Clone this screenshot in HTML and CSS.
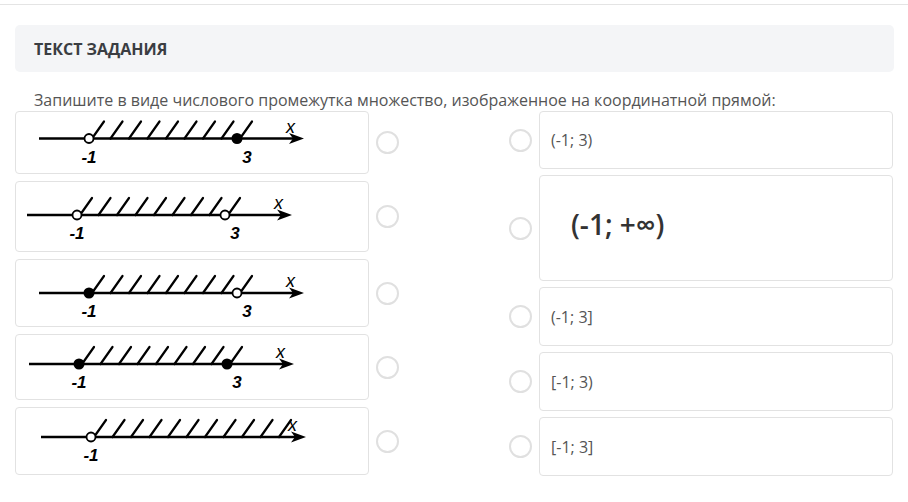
FILE: index.html
```html
<!DOCTYPE html>
<html lang="ru">
<head>
<meta charset="utf-8">
<title>Текст задания</title>
<link rel="stylesheet" href="styles.css">
</head>
<body>
<div class="topline"></div>
<div class="page">
  <div class="header">ТЕКСТ ЗАДАНИЯ</div>
  <p class="task">Запишите в виде числового промежутка множество, изображенное на координатной прямой:</p>
  <div class="answers">
    <div class="col col-left">
      <div class="row">
        <div class="card">
          <svg class="nl" width="352" height="61" viewBox="0 0 352 61">
            <g transform="translate(73 26.5)">
              <line class="ax" x1="-50" y1="0" x2="208" y2="0"/>
              <path class="arrow" d="M200,-5.5 L215,0 L200,5.5 L204,0 Z"/>
              <path class="hatch" d="M3,0 l12,-17 M21.5,0 l12,-17 M40,0 l12,-17 M58.5,0 l12,-17 M77,0 l12,-17 M95.5,0 l12,-17 M114,0 l12,-17 M132.5,0 l12,-17 M151,0 l12,-17"/>
              <circle class="open" cx="0" cy="0" r="4.5"/>
              <circle class="fill" cx="148" cy="0" r="5.5"/>
              <text class="lbl" x="0" y="24">-1</text>
              <text class="lbl" x="158" y="24">3</text>
              <text class="var" x="197" y="-6">x</text>
            </g>
          </svg>
        </div>
        <span class="radio"></span>
      </div>
      <div class="row">
        <div class="card">
          <svg class="nl" width="352" height="69" viewBox="0 0 352 69">
            <g transform="translate(61 33)">
              <line class="ax" x1="-50" y1="0" x2="208" y2="0"/>
              <path class="arrow" d="M200,-5.5 L215,0 L200,5.5 L204,0 Z"/>
              <path class="hatch" d="M3,0 l12,-17 M21.5,0 l12,-17 M40,0 l12,-17 M58.5,0 l12,-17 M77,0 l12,-17 M95.5,0 l12,-17 M114,0 l12,-17 M132.5,0 l12,-17 M151,0 l12,-17"/>
              <circle class="open" cx="0" cy="0" r="4.5"/>
              <circle class="open" cx="148" cy="0" r="4.5"/>
              <text class="lbl" x="0" y="24">-1</text>
              <text class="lbl" x="158" y="24">3</text>
              <text class="var" x="197" y="-6">x</text>
            </g>
          </svg>
        </div>
        <span class="radio"></span>
      </div>
      <div class="row">
        <div class="card">
          <svg class="nl" width="352" height="66" viewBox="0 0 352 66">
            <g transform="translate(73 33)">
              <line class="ax" x1="-50" y1="0" x2="208" y2="0"/>
              <path class="arrow" d="M200,-5.5 L215,0 L200,5.5 L204,0 Z"/>
              <path class="hatch" d="M3,0 l12,-17 M21.5,0 l12,-17 M40,0 l12,-17 M58.5,0 l12,-17 M77,0 l12,-17 M95.5,0 l12,-17 M114,0 l12,-17 M132.5,0 l12,-17 M151,0 l12,-17"/>
              <circle class="fill" cx="0" cy="0" r="5.5"/>
              <circle class="open" cx="148" cy="0" r="4.5"/>
              <text class="lbl" x="0" y="24">-1</text>
              <text class="lbl" x="158" y="24">3</text>
              <text class="var" x="197" y="-6">x</text>
            </g>
          </svg>
        </div>
        <span class="radio"></span>
      </div>
      <div class="row">
        <div class="card">
          <svg class="nl" width="352" height="64" viewBox="0 0 352 64">
            <g transform="translate(63 29)">
              <line class="ax" x1="-50" y1="0" x2="208" y2="0"/>
              <path class="arrow" d="M200,-5.5 L215,0 L200,5.5 L204,0 Z"/>
              <path class="hatch" d="M3,0 l12,-17 M21.5,0 l12,-17 M40,0 l12,-17 M58.5,0 l12,-17 M77,0 l12,-17 M95.5,0 l12,-17 M114,0 l12,-17 M132.5,0 l12,-17 M151,0 l12,-17"/>
              <circle class="fill" cx="0" cy="0" r="5.5"/>
              <circle class="fill" cx="148" cy="0" r="5.5"/>
              <text class="lbl" x="0" y="24">-1</text>
              <text class="lbl" x="158" y="24">3</text>
              <text class="var" x="197" y="-6">x</text>
            </g>
          </svg>
        </div>
        <span class="radio"></span>
      </div>
      <div class="row">
        <div class="card">
          <svg class="nl" width="352" height="66" viewBox="0 0 352 66">
            <g transform="translate(75 29)">
              <line class="ax" x1="-50" y1="0" x2="208" y2="0"/>
              <path class="arrow" d="M200,-5.5 L215,0 L200,5.5 L204,0 Z"/>
              <path class="hatch" d="M3,0 l12,-17 M21.5,0 l12,-17 M40,0 l12,-17 M58.5,0 l12,-17 M77,0 l12,-17 M95.5,0 l12,-17 M114,0 l12,-17 M132.5,0 l12,-17 M151,0 l12,-17 M169.5,0 l12,-17 M188,0 l12,-17"/>
              <circle class="open" cx="0" cy="0" r="4.5"/>
              <text class="lbl" x="0" y="24">-1</text>
              <text class="var" x="197" y="-6">x</text>
            </g>
          </svg>
        </div>
        <span class="radio"></span>
      </div>
    </div>
    <div class="col col-right">
      <div class="row">
        <span class="radio"></span>
        <div class="card card-text">(-1; 3)</div>
      </div>
      <div class="row">
        <span class="radio"></span>
        <div class="card card-text card-tall"><span class="big">(-1; +∞)</span></div>
      </div>
      <div class="row">
        <span class="radio"></span>
        <div class="card card-text">(-1; 3]</div>
      </div>
      <div class="row">
        <span class="radio"></span>
        <div class="card card-text">[-1; 3)</div>
      </div>
      <div class="row">
        <span class="radio"></span>
        <div class="card card-text">[-1; 3]</div>
      </div>
    </div>
  </div>
</div>
</body>
</html>
```
FILE: styles.css
```css
* { box-sizing: border-box; }

body {
  margin: 0;
  background: #ffffff;
  font-family: "Open Sans", "Liberation Sans", sans-serif;
  color: #555;
}

.topline {
  height: 5px;
  border-bottom: 1px solid #e4e4e4;
}

.page {
  width: 879px;
  margin-left: 15px;
}

.header {
  margin-top: 20px;
  height: 47px;
  background: #f4f5f7;
  border-radius: 5px;
  display: flex;
  align-items: center;
  padding-left: 19px;
  font-size: 16px;
  font-weight: 700;
  color: #3a3d42;
}

.task {
  margin: 17px 0 0 19px;
  font-size: 16px;
  line-height: 22px;
  color: #555;
}

.answers {
  display: flex;
  justify-content: space-between;
  width: 878px;
}

.col {
  display: flex;
  flex-direction: column;
  width: 384px;
}

.col-left { gap: 7px; }
.col-right { gap: 6px; }

.row {
  display: flex;
  align-items: center;
  gap: 7px;
}

.card {
  width: 354px;
  flex: none;
  border: 1px solid #e2e2e2;
  border-radius: 4px;
  background: #fff;
}

.nl { display: block; }

.ax { stroke: #000; stroke-width: 2.4; }
.arrow { fill: #000; }
.hatch { stroke: #000; stroke-width: 2.2; fill: none; stroke-linecap: round; }
.open { fill: #fff; stroke: #000; stroke-width: 1.8; }
.fill { fill: #000; }

.lbl {
  font-family: "Liberation Sans", Arial, sans-serif;
  font-size: 17px;
  font-weight: 700;
  font-style: italic;
  text-anchor: middle;
  fill: #000;
}

.var {
  font-family: "Liberation Sans", Arial, sans-serif;
  font-size: 18px;
  font-style: italic;
  fill: #000;
}

.radio {
  width: 23px;
  height: 23px;
  flex: none;
  border: 2px solid #e0e0e0;
  border-radius: 50%;
  background: #fff;
}

.card-text {
  height: 59px;
  display: flex;
  align-items: center;
  padding-left: 11px;
  font-size: 16px;
  color: #555;
}

.row:first-child .card-text { height: 58px; }

.card-tall {
  height: 106px;
  padding-left: 31px;
  padding-bottom: 8px;
}

.big {
  font-family: "Open Sans", sans-serif;
  font-size: 28px;
  font-weight: 600;
  color: #333;
}
```
